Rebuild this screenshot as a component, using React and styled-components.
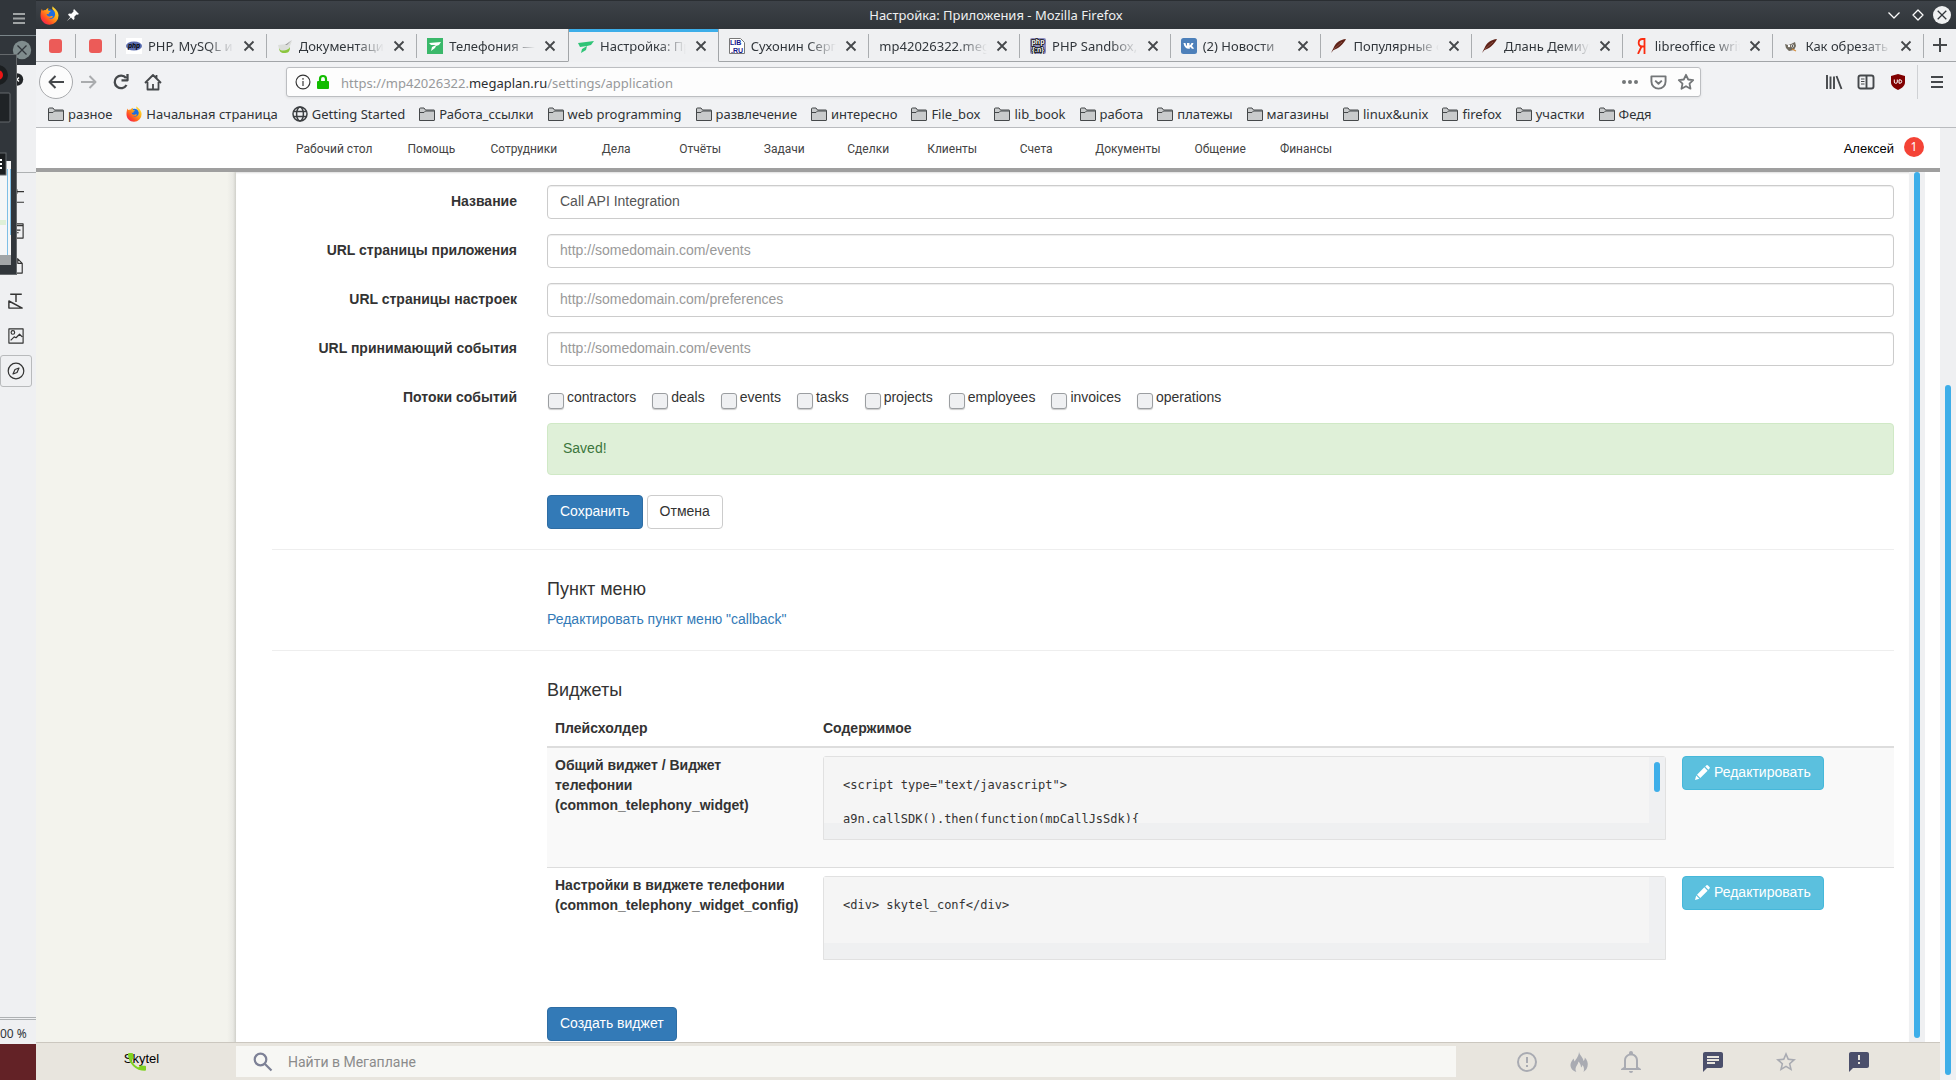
import React from "react";
import styled, { createGlobalStyle, css } from "styled-components";

const chromeFont = '"Noto Sans", "Open Sans", sans-serif';
const pageFont = '"Liberation Sans", Arial, sans-serif';

const GlobalStyle = createGlobalStyle`
  *, *::before, *::after { box-sizing: border-box; }
  html, body, #root { height: 100%; }
  body { margin: 0; overflow: hidden; background: #fff; font: 14px/20px ${pageFont}; color: #333; }
  button, input { font: inherit; }
  svg { display: block; flex: none; }
`;

const Desktop = styled.div`
  display: flex;
  height: 100vh;
`;

/* ---------- window behind ---------- */

const Strip = styled.aside`
  position: relative;
  flex: none;
  width: 36px;
  display: flex;
  flex-direction: column;
  overflow: hidden;
  background: #eff0f2;
  font-family: ${chromeFont};
`;
const StripTop = styled.div`
  height: 36px;
  flex: none;
  padding: 12px 0 0 12px;
  background: #31363b;
  border-bottom: 1px solid #7a8589;
`;
const StripTitle = styled.div`
  height: 29px;
  flex: none;
  padding: 4px 0 0 12px;
  background: #31363b;
`;
const StripTools = styled.div`
  flex: 1;
  display: flex;
  flex-direction: column;
  min-height: 0;
`;
const StripGap = styled.div`
  height: 108px;
  flex: none;
  margin-bottom: 5px;
  padding: 8px 0 0 11px;
  border-bottom: 1px solid #aeb1b3;
`;
const StripIcon = styled.div`
  height: 35px;
  flex: none;
  display: flex;
  align-items: center;
  padding-left: 8px;
`;
const StripChosen = styled(StripIcon)`
  width: 32px;
  height: 32px;
  margin-top: 2px;
  padding-left: 6px;
  border: 1px solid #b8babc;
  border-radius: 3px;
`;
const StripStatus = styled.div`
  flex: none;
  height: 27px;
  border-top: 3px double #aeb1b3;
  font-size: 12px;
  line-height: 28px;
  color: #31363b;
`;
const StripWall = styled.div`
  flex: none;
  height: 36px;
  background: #632226;
`;
const Popup = styled.div`
  position: absolute;
  left: 0;
  top: 54px;
  width: 17px;
  height: 221px;
  background: #31363b;
  border: solid #65696c;
  border-width: 1px 1px 1px 0;
`;

/* ---------- browser chrome ---------- */

const Browser = styled.div`
  flex: 1;
  min-width: 0;
  display: flex;
  flex-direction: column;
  font-family: ${chromeFont};
`;
const TitleBar = styled.div`
  flex: none;
  height: 29px;
  display: grid;
  grid-template-columns: 100px 1fr 100px;
  align-items: center;
  background: linear-gradient(#3d4248, #2f3439);
  border-top: 1px solid #2a2e32;
  color: #eff0f1;
  font-size: 13px;
  text-align: center;
`;
const TitleIcons = styled.div`
  display: flex;
  align-items: center;
  gap: 7px;
  padding-left: 4px;
`;
const TitleButtons = styled.div`
  display: flex;
  align-items: center;
  justify-content: flex-end;
  gap: 6px;
  padding-right: 5px;
`;
const IconButton = styled.button`
  display: flex;
  align-items: center;
  justify-content: center;
  flex: none;
  width: ${(p) => p.$w || 18}px;
  height: ${(p) => p.$h || 18}px;
  padding: 0;
  border: 0;
  background: none;
  color: ${(p) => p.$color || "#45484b"};
`;
const TabBar = styled.div`
  flex: none;
  display: flex;
  height: 33px;
  background: #eff0f2;
`;
const Tab = styled.div`
  position: relative;
  flex: ${(p) => (p.$pinned ? "0 0 40px" : "1 1 0")};
  min-width: 0;
  display: flex;
  align-items: center;
  gap: 6px;
  padding: 2px 9px 0 ${(p) => (p.$pinned ? 12 : 10)}px;
  border-bottom: 1px solid #a2a5a8;
  font-size: 13px;
  color: #31363b;
  &::after {
    content: "";
    position: absolute;
    right: 0;
    top: 5px;
    bottom: 3px;
    width: 1px;
    background: ${(p) => (p.$noLine ? "transparent" : "#aaadb0")};
  }
  ${(p) =>
    p.$active &&
    css`
      padding-right: 8px;
      padding-left: 9px;
      border-bottom-color: transparent;
      border-left: 1px solid #a2a5a8;
      border-right: 1px solid #a2a5a8;
      box-shadow: inset 0 3px #3daee9;
      &::after { display: none; }
    `}
`;
const TabText = styled.span`
  flex: 1;
  min-width: 0;
  overflow: hidden;
  white-space: nowrap;
  mask-image: linear-gradient(to left, transparent, #000 28px);
`;
const NewTab = styled.div`
  flex: 0 0 32px;
  display: flex;
  align-items: center;
  justify-content: center;
  border-bottom: 1px solid #a2a5a8;
`;
const NavBar = styled.div`
  flex: none;
  height: 40px;
  display: flex;
  align-items: center;
  background: #f1f2f4;
  padding-left: 3px;
`;
const NavButtons = styled.div`
  display: flex;
  align-items: center;
  width: 247px;
`;
const BackButton = styled(IconButton)`
  width: 34px;
  height: 34px;
  border: 1px solid #a8aaad;
  border-radius: 50%;
  background: #fcfcfc;
`;
const UrlBar = styled.div`
  flex: 1;
  min-width: 0;
  height: 30px;
  display: flex;
  align-items: center;
  gap: 4px;
  padding: 0 2px 0 8px;
  border: 1px solid #bcbec1;
  border-radius: 3px;
  background: #fdfdfd;
  box-shadow: 0 1px 3px rgba(0, 0, 0, 0.08);
`;
const UrlText = styled.span`
  flex: 1;
  padding: 1px 0 0 6px;
  font-size: 13px;
  color: #97999b;
  b { font-weight: 400; color: #2b2e31; }
`;
const NavTools = styled.div`
  display: flex;
  align-items: center;
  justify-content: flex-end;
  width: 255px;
`;
const NavMenu = styled.div`
  display: flex;
  align-items: center;
  height: 34px;
  margin-left: 3px;
  padding: 0 3px;
  border-left: 1px solid #cfd1d4;
`;
const Bookmarks = styled.nav`
  flex: none;
  display: flex;
  height: 26px;
  padding: 0 0 1px 12px;
  gap: 14px;
  background: #f1f2f4;
  border-bottom: 1px solid #b9bbbe;
  overflow: hidden;
`;
const Bookmark = styled.a`
  display: flex;
  align-items: center;
  gap: 4px;
  font-size: 13px;
  color: #2f3336;
  text-decoration: none;
  white-space: nowrap;
`;

/* ---------- page ---------- */

const Viewport = styled.div`
  flex: 1;
  min-height: 0;
  display: flex;
  font-family: ${pageFont};
`;
const Page = styled.div`
  flex: 1;
  min-width: 0;
  display: flex;
  flex-direction: column;
`;
const Track = styled.div`
  flex: none;
  display: flex;
  flex-direction: column;
  width: 16px;
  padding: ${(p) => p.$pad || "0 5px 5px"};
  background: #eff0f2;
`;
const Thumb = styled.div`
  flex: ${(p) => p.$size};
  border-radius: 3px;
  background: #3daee9;
`;
const Space = styled.div`
  flex: ${(p) => p.$size};
`;
const Header = styled.header`
  flex: none;
  height: 44px;
  display: flex;
  align-items: center;
  padding: 2px 16px 0 243px;
  border-bottom: 4px solid #9f9f9f;
  background: #fff;
`;
const Menu = styled.nav`
  flex: 1;
  display: flex;
`;
const MenuItem = styled.a`
  min-width: 84px;
  padding: 0 17px;
  font: 12px/18px Roboto, sans-serif;
  text-align: center;
  white-space: nowrap;
  color: #444;
  text-decoration: none;
`;
const User = styled.a`
  margin-right: 10px;
  font-size: 13px;
  color: #000;
  text-decoration: none;
`;
const Badge = styled.span`
  width: 20px;
  height: 20px;
  margin-bottom: 4px;
  border-radius: 50%;
  background: #f44336;
  color: #fff;
  font: 12px/20px ${chromeFont};
  text-align: center;
`;
const Body = styled.div`
  flex: 1;
  min-height: 0;
  display: flex;
  padding-right: 15px;
  background: #fff;
`;
const Sidebar = styled.div`
  flex: none;
  width: 200px;
  background: linear-gradient(to left, #d0d0ca, #e9e9e4 3px, #f3f3ed 9px);
`;
const Main = styled.main`
  flex: 1;
  min-width: 0;
  overflow: hidden;
  padding: 13px 15px 0 36px;
  box-shadow: inset 0 2px 2px -1px #ddd;
`;
const FormRow = styled.div`
  display: grid;
  grid-template-columns: minmax(120px, 245px) 1fr;
  column-gap: 30px;
  margin-bottom: 15px;
`;
const labelStyle = css`
  padding-top: 6px;
  font-weight: 700;
  text-align: right;
`;
const FieldLabel = styled.label`
  ${labelStyle}
`;
const GroupLabel = styled.span`
  ${labelStyle}
`;
const Field = styled.input`
  width: 100%;
  height: 34px;
  padding: 4px 12px 6px;
  border: 1px solid #ccc;
  border-radius: 4px;
  box-shadow: inset 0 1px 1px rgba(0, 0, 0, 0.075);
  background: #fff;
  color: #555;
  &::placeholder { color: #999; }
`;
const Checks = styled.div`
  display: flex;
  flex-wrap: wrap;
  gap: 16px;
  padding: 6px 0 1px 1px;
`;
const Check = styled.label`
  display: flex;
  align-items: flex-start;
  gap: 3px;
  height: 20px;
`;
const CheckBox = styled.input`
  appearance: none;
  width: 16px;
  height: 16px;
  margin: 6px 0 0;
  border: 1px solid #9b9ea1;
  border-radius: 3px;
  background: #eff0f2;
  box-shadow: 0 1px 1px rgba(0, 0, 0, 0.2);
`;
const Indent = styled.div`
  margin-left: 275px;
`;
const Alert = styled.div`
  padding: 14px 15px 16px;
  margin-bottom: 20px;
  border: 1px solid #d0e9c6;
  border-radius: 4px;
  background: #dff0d8;
  color: #3c763d;
`;
const Buttons = styled.div`
  display: flex;
  gap: 4px;
`;
const tones = {
  primary: ["#337ab7", "#2e6da4", "#fff"],
  plain: ["#fff", "#ccc", "#333"],
  info: ["#5bc0de", "#46b8da", "#fff"],
};
const Button = styled.button`
  display: inline-flex;
  align-items: center;
  vertical-align: top;
  gap: 4px;
  height: 34px;
  padding: 0 12px 2px;
  border: 1px solid ${(p) => tones[p.$tone][1]};
  border-radius: 4px;
  background: ${(p) => tones[p.$tone][0]};
  color: ${(p) => tones[p.$tone][2]};
  white-space: nowrap;
`;
const Rule = styled.hr`
  margin: 20px 0;
  border: 0;
  border-top: 1px solid #eee;
`;
const Heading = styled.h4`
  margin: 10px 0;
  padding-top: 9px;
  font-size: 18px;
  font-weight: 400;
  line-height: 20px;
`;
const Link = styled.a`
  display: block;
  padding-bottom: 1px;
  color: #337ab7;
  text-decoration: none;
`;
const Table = styled.table`
  width: 100%;
  margin-bottom: 20px;
  border-collapse: collapse;
  table-layout: fixed;
  th, td {
    padding: 8px;
    text-align: left;
    vertical-align: top;
  }
  thead th, thead td { padding: 8px; border-bottom: 2px solid #ddd; }
  tbody th { padding-top: 7px; white-space: pre-line; }
  tbody tr + tr { border-top: 1px solid #ddd; }
  tbody tr:nth-child(odd) { background: #f9f9f9; }
`;
const Col = styled.col`
  width: ${(p) => p.$w};
`;
const CodeFrame = styled.div`
  display: grid;
  grid-template-columns: 1fr 16px;
  grid-template-rows: 66px 16px;
  margin-bottom: 19px;
  border: 1px solid #e1e1e1;
  border-radius: 3px 3px 0 0;
  background: #eff0f1;
`;
const Code = styled.pre`
  margin: 0;
  padding: 20px 19px 0;
  overflow: hidden;
  background: #f5f5f5;
  font: 12px/17px "DejaVu Sans Mono", monospace;
`;

/* ---------- bottom bar ---------- */

const BottomBar = styled.footer`
  flex: none;
  display: grid;
  grid-template-columns: 200px minmax(0, 1220fr) minmax(0, 484fr);
  align-items: center;
  height: 38px;
  border-top: 1px solid #cbc7bf;
  background: #e8e5de;
`;
const Phone = styled.div`
  position: relative;
  padding: 0 0 6px 11px;
  text-align: center;
  font-size: 13px;
  color: #000;
  svg { position: absolute; left: 92px; top: 4px; }
`;
const Search = styled.div`
  display: flex;
  align-items: center;
  gap: 15px;
  height: 31px;
  padding-left: 17px;
  background: #f7f7f4;
`;
const SearchInput = styled.input`
  flex: 1;
  padding: 0;
  border: 0;
  background: none;
  font: 14px/20px Roboto, sans-serif;
  &::placeholder { color: #8b8b8b; opacity: 1; }
`;
const Status = styled.div`
  display: flex;
  justify-content: center;
  gap: 19px;
`;
const StatusGroup = styled.div`
  display: grid;
  grid-template-columns: repeat(3, ${(p) => p.$cell}px);
  justify-items: center;
`;

/* ---------- icons ---------- */

const Firefox = ({ size = 19 }) => (
  <svg width={size} height={size} viewBox="0 0 20 20">
    <defs>
      <linearGradient id="fx" x1="1" y1="0" x2="0.1" y2="1">
        <stop offset="0" stopColor="#fff44f" />
        <stop offset="0.4" stopColor="#ffae16" />
        <stop offset="0.75" stopColor="#ff4a26" />
        <stop offset="1" stopColor="#ee1466" />
      </linearGradient>
    </defs>
    <circle cx="10.4" cy="9.6" r="6.2" fill="#1d6de0" />
    <path d="M2 3c.3 1 .6 1.500 1 2 .9-.6 2-.8 3-.6.800-1.200 1.900-2 3-2.200-.5.800-.7 1.500-.5 2.200.5 1 2.300.8 2.700 1.200-.1.800-1.600 1.200-1.900 1.600-.3.600.2 1.200-.1 1.400-.8 0-1.400-.5-2.200-.1.200 1.900 2.200 3 4 2.300 1.300-.5 2.200-.6 2.700.1-1 2-3.200 2.700-5 2.200 3 1.500 7-.5 7.200-4.200.1-2.700-1.300-4-2.400-5C12.700 3 12.600 1.500 13.500.2c.5 2.100 5.900 4 6 9.800A9.500 9.500 0 0 1 10 19.700C4.700 19.700.6 15.500.6 10.300.6 7.500 1 5 2 3z" fill="url(#fx)" />
  </svg>
);
const Pin = () => (
  <svg width="14" height="14" viewBox="0 0 14 14" fill="#fcfcfc">
    <path d="M8 1l5 5-1.500.7-1-.2-2.200 2.300.2 2.200L7.300 12 5 9.600.8 13.200 4.300 9 2 6.700l1-1.200 2.300.2L7.500 3.500l-.2-1z" />
  </svg>
);
const Cross = ({ size = 12, w = 2 }) => (
  <svg width={size} height={size} viewBox="0 0 12 12" stroke="currentColor" strokeWidth={w} fill="none">
    <path d="M1.500 1.500l9 9M10.500 1.500l-9 9" />
  </svg>
);
const Folder = () => (
  <svg width="16" height="14" viewBox="0 0 16 14" fill="#c9cbcc" stroke="#45484a">
    <path d="M.5 13.500V2q0-1 1-1H5l1.500 2H15q.5 0 .5.500v9.500q0 .5-.5.500z" />
    <path d="M.5 5.500H5l1.500-1.500h9" fill="none" />
  </svg>
);
const Globe = () => (
  <svg width="16" height="16" viewBox="0 0 16 16" fill="none" stroke="#3c3f42" strokeWidth="1.500">
    <circle cx="8" cy="8" r="7" />
    <ellipse cx="8" cy="8" rx="3.400" ry="7" />
    <path d="M1.500 5.500h13M1.500 10.500h13" />
  </svg>
);
const RedSquare = () => (
  <svg width="16" height="16" viewBox="0 0 16 16">
    <rect x="1" y="1" width="13" height="14" rx="3" fill="#ec5b58" />
  </svg>
);
const PhpIcon = () => (
  <svg width="16" height="16" viewBox="0 0 16 16">
    <rect width="16" height="16" fill="#fff" />
    <ellipse cx="8" cy="8" rx="8" ry="4.500" fill="#5b6cae" />
    <text x="8" y="10" fontSize="6.500" fontWeight="700" fontStyle="italic" textAnchor="middle" fontFamily="Liberation Sans, sans-serif">php</text>
  </svg>
);
const DocIcon = () => (
  <svg width="16" height="16" viewBox="0 0 16 16">
    <path d="M1 7l9-1 5-3-3 7-7 4-3-3z" fill="#dcdedb" />
    <path d="M2 10c1 4 9 3 11-1 0 5-2 6-6 6-3 0-5-2-5-5z" fill="#8cc63f" />
    <path d="M8 7l7-5-5 5z" fill="#999" />
  </svg>
);
const GreenBox = () => (
  <svg width="16" height="16" viewBox="0 0 16 16">
    <rect width="16" height="16" fill="#3ab86a" />
    <path d="M2 5l12-1-2 3-3 1-1 2-4 3 1-4 4-2H4z" fill="#fff" />
  </svg>
);
const GreenWing = () => (
  <svg width="16" height="16" viewBox="0 0 16 16">
    <path d="M0 5l16-2-3 4-4 1-1 4-5 3 1-4 5-3-7 1z" fill="#2fc477" />
  </svg>
);
const LibRu = () => (
  <svg width="16" height="16" viewBox="0 0 16 16" fontFamily="Liberation Sans, sans-serif" fontSize="7" fontWeight="700" fill="#15158c">
    <path d="M.5.500h11l4 4v11H.5z" fill="#fff" stroke="#777" />
    <text x="1" y="7">LIB</text>
    <text x="2" y="15">.RU</text>
  </svg>
);
const Sandbox = () => (
  <svg width="16" height="16" viewBox="0 0 16 16" fontFamily="Liberation Sans, sans-serif" fontSize="7" fontWeight="700" textAnchor="middle">
    <rect width="16" height="16" rx="2" fill="#8e8ec0" />
    <g stroke="#111" strokeWidth="1.500" paintOrder="stroke" fill="#fff">
      <text x="8" y="6">php</text>
      <text x="8" y="14">{"{:n}"}</text>
    </g>
  </svg>
);
const Vk = () => (
  <svg width="16" height="16" viewBox="0 0 16 16">
    <rect width="16" height="16" rx="2.500" fill="#4d80ba" />
    <path d="M2.500 5h2c.2 1.500.8 2.500 1.500 3V5h2.500v2.500C9.500 7 10 6 10.500 5h2c-.3 1.200-1 2.200-1.700 2.900.9.500 1.700 1.500 2.200 2.900h-2.200c-.4-1-1.200-1.600-2-1.800v1.800H7.900C5 10.800 3 8.800 2.500 5z" fill="#fff" />
  </svg>
);
const Feather = () => (
  <svg width="16" height="16" viewBox="0 0 16 16">
    <path d="M0 15l2.500-5C4.500 5 9 1.500 15 1c-1 2-3 5-6 7.500C7 10.500 4 11.500 2.500 12z" fill="#5f2218" />
    <path d="M3 11l8-7" stroke="#a5705f" strokeWidth=".6" />
  </svg>
);
const Yandex = () => (
  <svg width="16" height="16" viewBox="0 0 16 16" fill="none" stroke="#fb2c10" strokeWidth="1.800">
    <path d="M11.500 16V1H9.500C4.500 1 4.500 8.500 9 8.500h2.500M8.500 8.500L5 16" />
  </svg>
);
const Gimp = () => (
  <svg width="16" height="16" viewBox="0 0 16 16">
    <path d="M2 6l3 1 3-1 4-2 1 4-2 4-5 1-3-3z" fill="#6f6a5f" />
    <circle cx="6" cy="8" r="1.200" fill="#fff" />
    <circle cx="9.500" cy="8" r="1.400" fill="#fff" />
    <circle cx="9.500" cy="8" r=".7" />
    <path d="M9 11l4 2" stroke="#d58d3a" strokeWidth="1.200" />
  </svg>
);

const Stroke = ({ w = 18, d, sw = 2, children }) => (
  <svg width={w} height={w} viewBox="0 0 18 18" fill="none" stroke="currentColor" strokeWidth={sw} strokeLinejoin="round">
    {d && <path d={d} />}
    {children}
  </svg>
);
const star = "M9 1.800l2.200 4.700 5 .6-3.700 3.500 1 5.100L9 13.200l-4.500 2.500 1-5.100L1.800 7.100l5-.6z";

const MaterialIcon = ({ d, color = "#a9abb2" }) => (
  <svg width="24" height="24" viewBox="0 0 24 24" fill={color}><path d={d} /></svg>
);

/* ---------- data ---------- */

const tabs = [
  [PhpIcon, "PHP, MySQL и другие"],
  [DocIcon, "Документация"],
  [GreenBox, "Телефония — М"],
  [GreenWing, "Настройка: Приложения"],
  [LibRu, "Сухонин Сергей"],
  [null, "mp42026322.megaplan"],
  [Sandbox, "PHP Sandbox, test"],
  [Vk, "(2) Новости"],
  [Feather, "Популярные фай"],
  [Feather, "Длань Демиурга"],
  [Yandex, "libreoffice writer"],
  [Gimp, "Как обрезать из"],
];
const bookmarks = [
  "разное", "Начальная страница", "Getting Started", "Работа_ссылки", "web programming", "развлечение",
  "интересно", "File_box", "lib_book", "работа", "платежы", "магазины", "linux&unix", "firefox", "участки", "Федя",
];
const bookmarkIcons = { 1: <Firefox size={16} />, 2: <Globe /> };
const menu = [
  "Рабочий стол", "Помощь", "Сотрудники", "Дела", "Отчёты", "Задачи",
  "Сделки", "Клиенты", "Счета", "Документы", "Общение", "Финансы",
];
const fields = [
  { id: "name", label: "Название", value: "Call API Integration" },
  { id: "appUrl", label: "URL страницы приложения", hint: "http://somedomain.com/events" },
  { id: "prefUrl", label: "URL страницы настроек", hint: "http://somedomain.com/preferences" },
  { id: "hookUrl", label: "URL принимающий события", hint: "http://somedomain.com/events" },
];
const streams = ["contractors", "deals", "events", "tasks", "projects", "employees", "invoices", "operations"];
const widgets = [
  {
    title: "Общий виджет / Виджет\nтелефонии\n(common_telephony_widget)",
    code: '<script type="text/javascript">\n\na9n.callSDK().then(function(mpCallJsSdk){',
    scroll: true,
  },
  { title: "Настройки в виджете телефонии\n(common_telephony_widget_config)", code: "<div> skytel_conf</div>" },
];

/* ---------- parts ---------- */

const BackWindow = () => (
  <Strip>
    <StripTop>
      <svg width="14" height="14" viewBox="0 0 14 14" stroke="#a0a4a5" strokeWidth="2"><path d="M1 2h12M1 6.500h12M1 11h12" /></svg>
    </StripTop>
    <StripTitle>
      <svg width="20" height="20" viewBox="0 0 20 20">
        <circle cx="10" cy="10" r="9.200" fill="#7f8c8d" />
        <path d="M5.500 5.500l9 9M14.500 5.500l-9 9" stroke="#31363b" strokeWidth="1.300" />
      </svg>
    </StripTitle>
    <StripTools>
      <StripGap>
        <svg width="13" height="13" viewBox="0 0 13 13">
          <circle cx="6" cy="6.500" r="6.200" fill="#232629" />
          <path d="M4 4.500l4 4M8 4.500l-4 4" stroke="#fff" strokeWidth="1.300" />
        </svg>
      </StripGap>
      <StripIcon><Stroke w={16} sw={1.3} d="M2 4h16M2 16h16M10 1.500v5" /></StripIcon>
      <StripIcon><Stroke w={16} sw={1.3} d="M1 1h16v16H1zM1 3h16M4 8h10M4 11h8" /></StripIcon>
      <StripIcon><Stroke w={16} sw={1.3} d="M2 1h9l5 5v11H2zM11 1v5h5" /></StripIcon>
      <StripIcon><Stroke w={16} sw={1.6} d="M2.500 1.500h13M9 1.500V10M1 9v8h15z" /></StripIcon>
      <StripIcon>
        <Stroke w={16} sw={1.3} d="M1 1h16v16H1zM3 14l4-4 2 1 4-4 3 3"><circle cx="5.500" cy="5" r="2" /></Stroke>
      </StripIcon>
      <StripChosen>
        <Stroke w={18} sw={1.2} d="M12 6l-2 4.500L6 12l2-4.500z"><circle cx="9" cy="9" r="7.800" /></Stroke>
      </StripChosen>
    </StripTools>
    <StripStatus>00 %</StripStatus>
    <StripWall />
    <Popup>
      <svg width="16" height="219" viewBox="0 0 16 219">
        <circle cx="-2" cy="20" r="10" fill="#1b1e20" />
        <circle cx="-2" cy="20" r="5" fill="#ed1515" />
        <rect x="-2" y="38" width="12" height="29" rx="1" fill="#1f2326" stroke="#65696c" />
        <rect x="-1" y="106" width="12" height="104" fill="#f5f6f7" />
        <path d="M7.500 114v86M10.500 114v66" stroke="#7fbfe6" />
        <rect x="0" y="165" width="6" height="5" fill="#dff0d8" />
        <rect x="-1" y="200" width="12" height="10" fill="#a2a5a7" />
        <rect x="-2" y="98" width="8" height="22" fill="#1b1e20" stroke="#65696c" />
        <path d="M0 105h2M0 109h2M0 113h2" stroke="#fff" strokeWidth="2" />
      </svg>
    </Popup>
  </Strip>
);

const Chrome = () => (
  <>
    <TitleBar>
      <TitleIcons><Firefox /><Pin /></TitleIcons>
      <span>Настройка: Приложения - Mozilla Firefox</span>
      <TitleButtons>
        <IconButton $color="#fcfcfc" aria-label="Свернуть"><Stroke w={18} sw={1.3} d="M3.500 6.500L9 12l5.500-5.500" /></IconButton>
        <IconButton $color="#fcfcfc" aria-label="Развернуть"><Stroke w={18} sw={1.3} d="M9 4l5 5-5 5-5-5z" /></IconButton>
        <IconButton aria-label="Закрыть">
          <svg width="18" height="18" viewBox="0 0 18 18">
            <circle cx="9" cy="9" r="9" fill="#eff0f1" />
            <path d="M4.700 4.700l8.600 8.600M13.300 4.700l-8.600 8.600" stroke="#31363b" strokeWidth="1.300" />
          </svg>
        </IconButton>
      </TitleButtons>
    </TitleBar>
    <TabBar>
      <Tab $pinned><RedSquare /></Tab>
      <Tab $pinned><RedSquare /></Tab>
      {tabs.map(([Icon, text], i) => (
        <Tab key={text} $active={i === 3} $noLine={i === 2}>
          {Icon && <Icon />}
          <TabText>{text}</TabText>
          <IconButton aria-label="Закрыть вкладку"><Cross size={12} w={1.800} /></IconButton>
        </Tab>
      ))}
      <NewTab>
        <IconButton aria-label="Новая вкладка"><Stroke w={18} d="M9 2v14M2 9h14" /></IconButton>
      </NewTab>
    </TabBar>
    <NavBar>
      <NavButtons>
        <BackButton aria-label="Назад"><Stroke d="M17 9H2.500M8.500 3l-6 6 6 6" /></BackButton>
        <IconButton $w={32} $color="#aaacae" aria-label="Вперёд"><Stroke d="M1 9h14.500M9.500 3l6 6-6 6" /></IconButton>
        <IconButton $w={32} aria-label="Обновить"><Stroke sw={2.300} d="M14.500 12A6.300 6.300 0 1 1 14 5M15.500 1v6.300H9.500" /></IconButton>
        <IconButton $w={32} aria-label="Домой"><Stroke sw={1.800} d="M1 10l8-8 8 8M3.500 9v7.500h11V9M9 16v-5M12.500 2v3" /></IconButton>
      </NavButtons>
      <UrlBar>
        <Stroke w={16} sw={1.300} d="M9 8v5.500M9 4.500v2"><circle cx="9" cy="9" r="7.800" /></Stroke>
        <svg width="16" height="16" viewBox="0 0 16 16">
          <rect x="2" y="7" width="12" height="8" rx="1" fill="#12bc00" />
          <path d="M5 8V5a3 3 0 0 1 6 0v3" fill="none" stroke="#12bc00" strokeWidth="2.200" />
        </svg>
        <UrlText>https://mp42026322.<b>megaplan.ru</b>/settings/application</UrlText>
        <IconButton $w={24} $color="#737678" aria-label="Действия">
          <svg width="16" height="16" viewBox="0 0 16 16" fill="currentColor"><circle cx="2" cy="8" r="2" /><circle cx="8" cy="8" r="2" /><circle cx="14" cy="8" r="2" /></svg>
        </IconButton>
        <IconButton $w={24} $color="#737678" aria-label="Pocket">
          <Stroke w={17} d="M1.500 2.500h15V8a7.500 7.500 0 0 1-15 0zM5.500 7L9 10.300 12.500 7" />
        </IconButton>
        <IconButton $w={24} $color="#737678" aria-label="В закладки"><Stroke w={18} sw={1.800} d={star} /></IconButton>
      </UrlBar>
      <NavTools>
        <IconButton $w={32} aria-label="Библиотека"><Stroke sw={1.900} d="M2 2v14M5.500 3.500V16M9 3.500V16M11.500 3l5 13" /></IconButton>
        <IconButton $w={32} aria-label="Боковые панели">
          <Stroke sw={1.900}><rect x="1.500" y="2.500" width="15" height="13" rx="2" /><path d="M9.500 3v12" /><path d="M4 6h3.500M4 8.500h3.500M4 11h3.500" strokeWidth="1" /></Stroke>
        </IconButton>
        <IconButton $w={32} aria-label="uBlock Origin">
          <svg width="16" height="16" viewBox="0 0 16 16">
            <path d="M8 0l7 2v6c0 4-3 6-7 8-4-2-7-4-7-8V2z" fill="#800000" />
            <path d="M4.300 5.500v2.600q0 1.200 1.500 1.200T7.300 8.100V5.500M9 5.800h1q1.700 0 1.700 1.700T10 9.200H9z" fill="none" stroke="#fff" />
          </svg>
        </IconButton>
        <NavMenu><IconButton $w={32} aria-label="Меню"><Stroke sw={2.200} d="M3 4h12M3 9h12M3 14h12" /></IconButton></NavMenu>
      </NavTools>
    </NavBar>
    <Bookmarks>
      {bookmarks.map((b, i) => (
        <Bookmark key={b} href="#">{bookmarkIcons[i] || <Folder />}{b}</Bookmark>
      ))}
    </Bookmarks>
  </>
);

const Settings = () => (
  <Main>
    {fields.map((f) => (
      <FormRow key={f.id}>
        <FieldLabel htmlFor={f.id}>{f.label}</FieldLabel>
        <Field id={f.id} type="text" defaultValue={f.value} placeholder={f.hint} />
      </FormRow>
    ))}
    <FormRow>
      <GroupLabel id="streams">Потоки событий</GroupLabel>
      <Checks role="group" aria-labelledby="streams">
        {streams.map((s) => (
          <Check key={s}><CheckBox type="checkbox" />{s}</Check>
        ))}
      </Checks>
    </FormRow>
    <Indent>
      <Alert role="status">Saved!</Alert>
      <Buttons>
        <Button $tone="primary">Сохранить</Button>
        <Button $tone="plain">Отмена</Button>
      </Buttons>
    </Indent>
    <Rule />
    <Indent>
      <Heading>Пункт меню</Heading>
      <Link href="#">Редактировать пункт меню "callback"</Link>
    </Indent>
    <Rule />
    <Indent>
      <Heading>Виджеты</Heading>
      <Table>
        <colgroup><Col $w="268px" /><Col /><Col $w="220px" /></colgroup>
        <thead>
          <tr><th scope="col">Плейсхолдер</th><th scope="col">Содержимое</th><td /></tr>
        </thead>
        <tbody>
          {widgets.map((w) => (
            <tr key={w.title}>
              <th scope="row">{w.title}</th>
              <td>
                <CodeFrame>
                  <Code>{w.code}</Code>
                  <Track $pad="5px 5px 0">{w.scroll && <Thumb $size="0 0 30px" />}</Track>
                </CodeFrame>
              </td>
              <td>
                <Button $tone="info">
                  <svg width="15" height="15" viewBox="0 0 15 15" fill="#fff">
                    <path d="M0 15l1.200-4.400 3.200 3.200zM2 9.700l7.300-7.400 3.300 3.400L5.300 13zM10.200 1.500L11.500.3q.8-.5 1.500.2l1.500 1.500q.6.700 0 1.400l-1.100 1.300z" />
                  </svg>
                  Редактировать
                </Button>
              </td>
            </tr>
          ))}
        </tbody>
      </Table>
      <Button $tone="primary">Создать виджет</Button>
    </Indent>
  </Main>
);

export default function App() {
  return (
    <Desktop>
      <GlobalStyle />
      <BackWindow />
      <Browser>
        <Chrome />
        <Viewport>
          <Page>
            <Header>
              <Menu>{menu.map((m) => <MenuItem key={m} href="#">{m}</MenuItem>)}</Menu>
              <User href="#">Алексей</User>
              <Badge>1</Badge>
            </Header>
            <Body>
              <Sidebar />
              <Settings />
              <Track $pad="0 5px 4px"><Thumb $size="1" /></Track>
            </Body>
            <BottomBar>
              <Phone>
                Skytel
                <svg width="18" height="18" viewBox="0 0 18 18" fill="#7ed321">
                  <path d="M0 1q0-1 1-1h3q1 0 1 1 0 2 .6 3.600.1.600-.3 1L3.600 7.800a15 15 0 0 0 6.600 6.600l2.200-2q.5-.4 1-.2 1.600.5 3.600.6 1 0 1 1v3q0 1-1 1A17 17 0 0 1 0 1z" />
                </svg>
              </Phone>
              <Search>
                <svg width="20" height="20" viewBox="0 0 20 20" fill="none" stroke="#7d8196" strokeWidth="2.200">
                  <circle cx="7.500" cy="7.500" r="5.800" /><path d="M12 12l6.500 6.500" />
                </svg>
                <SearchInput type="search" aria-label="Поиск" placeholder="Найти в Мегаплане" />
              </Search>
              <Status>
                <StatusGroup $cell={52}>
                  <MaterialIcon d="M11 15h2v2h-2zm0-8h2v6h-2zm1-5a10 10 0 1 0 0 20 10 10 0 0 0 0-20zm0 18a8 8 0 1 1 0-16 8 8 0 0 1 0 16z" />
                  <MaterialIcon d="M12 1.500c.3 3.500 4 5.500 4.500 9.500 1-.8 1.300-2 1.300-3.500 2.500 2.500 3.600 5.500 2.700 9-.6 2.500-2 4-4 5.500 1-2.500.5-5-1-7-.2 1.200-.7 2-1.500 2.500 0-2.500-1-4.500-2.500-6-.3 3-2.800 4.500-3 7.500 0 1 .3 2.200.8 3C6 21 4 19 3.500 16 3 13 5 11 6.500 8.500l1 3C9.500 8.500 12 6 12 1.500z" />
                  <MaterialIcon d="M12 23a2 2 0 0 0 2-2h-4a2 2 0 0 0 2 2zm7-6v-6.500c0-3.300-2-6-5-6.700V3a2 2 0 0 0-4 0v.8c-3 .7-5 3.400-5 6.700V17l-3 2v1h20v-1zm-2 1H7v-7.500c0-3 2-5 5-5s5 2 5 5z" />
                </StatusGroup>
                <StatusGroup $cell={73}>
                  <MaterialIcon color="#4b4f6b" d="M20 2H4c-1.100 0-2 .9-2 2v18l4-4h14c1.100 0 2-.9 2-2V4c0-1.100-.9-2-2-2zM6 6h12v2H6zm0 3h12v2H6zm8 5H6v-2h8z" />
                  <MaterialIcon d="M22 9.200l-7.200-.6L12 2 9.200 8.600 2 9.200l5.500 4.800L5.800 21 12 17.300 18.200 21l-1.700-7zM12 15.400l-3.800 2.300 1-4.300-3.300-2.900 4.400-.4L12 6.100l1.700 4 4.400.4-3.300 2.900 1 4.300z" />
                  <MaterialIcon color="#4b4f6b" d="M20 2H4c-1.100 0-2 .9-2 2v18l4-4h14c1.100 0 2-.9 2-2V4c0-1.100-.9-2-2-2zm-7 12h-2v-2h2zm0-4h-2V5h2z" />
                </StatusGroup>
              </Status>
            </BottomBar>
          </Page>
          <Track><Space $size="257" /><Thumb $size="690" /></Track>
        </Viewport>
      </Browser>
    </Desktop>
  );
}
